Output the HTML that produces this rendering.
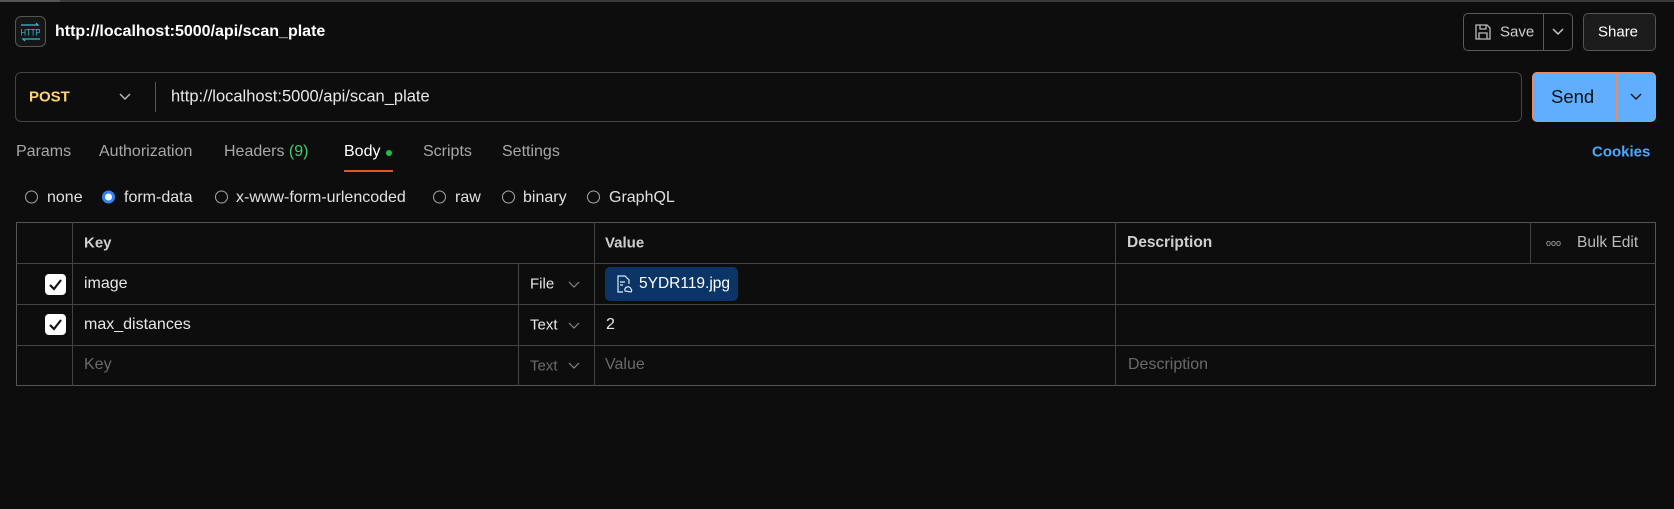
<!DOCTYPE html>
<html><head><meta charset="utf-8"><style>
*{box-sizing:border-box;margin:0;padding:0}
body{width:1674px;height:509px;background:#0d0d0d;font-family:"Liberation Sans",sans-serif;color:#d0d0d0;position:relative;overflow:hidden;font-size:16px}
.a{position:absolute}
.t{position:absolute;white-space:nowrap;transform:translateY(-50%)}
.rad{position:absolute;width:13px;height:13px;border:1px solid #a8a8a8;border-radius:50%;transform:translateY(-50%)}
.cb{position:absolute;width:21px;height:21px;background:#fff;border-radius:4px}
.hl{position:absolute;height:1px;background:#444}
.vl{position:absolute;width:1px;background:#444}
</style></head><body>
<div class="a" style="left:0;top:0;width:1674px;height:2px;background:#3a3a3a"></div>
<div class="a" style="left:0;top:0;width:60px;height:2px;background:#555"></div>

<div class="a" style="left:15px;top:16px;width:31px;height:31px;border:1px solid #555;border-radius:6px;background:#161616"></div>
<svg class="a" style="left:15px;top:16px" width="31" height="31" viewBox="0 0 31 31"><g stroke="#2ec4d6" fill="none" stroke-width="1.2"><path d="M6 9h17l-2-2M25 23H8l2 2"/></g><text x="15.5" y="19.5" font-size="9.5" fill="#2ec4d6" text-anchor="middle" font-family="Liberation Sans" textLength="20" lengthAdjust="spacingAndGlyphs">HTTP</text></svg>
<div class="t" style="left:55px;top:32px;font-weight:bold;font-size:16px;color:#fff">http://localhost:5000/api/scan_plate</div>

<div class="a" style="left:1463px;top:13px;width:110px;height:38px;border:1px solid #5a5a5a;border-radius:5px"></div>
<div class="vl" style="left:1543px;top:13px;height:38px;background:#5a5a5a"></div>
<svg class="a" style="left:1473px;top:22px" width="20" height="20" viewBox="0 0 20 20" fill="none" stroke="#bbb" stroke-width="1.3"><path d="M3 3h11l3 3v11H3z"/><path d="M7 3v4h6V3M6 17v-6h8v6"/></svg>
<div class="t" style="left:1500px;top:32px;color:#cfcfcf;font-size:15px">Save</div>
<svg class="a" style="left:1551px;top:27px" width="14" height="10" viewBox="0 0 14 10"><path d="M2 2l5 5 5-5" stroke="#ccc" fill="none" stroke-width="1.4"/></svg>
<div class="a" style="left:1583px;top:13px;width:73px;height:38px;border:1px solid #555;border-radius:5px;background:#1c1c1c"></div>
<div class="t" style="left:1598px;top:32px;color:#fff;font-size:15px">Share</div>

<div class="a" style="left:15px;top:72px;width:1507px;height:50px;border:1px solid #444;border-radius:6px"></div>
<div class="t" style="left:29px;top:97px;color:#ffd27a;font-weight:bold;font-size:15px">POST</div>
<svg class="a" style="left:118px;top:92px" width="14" height="10" viewBox="0 0 14 10"><path d="M2 2l5 5 5-5" stroke="#bbb" fill="none" stroke-width="1.4"/></svg>
<div class="vl" style="left:155px;top:82px;height:30px;background:#555"></div>
<div class="t" style="left:171px;top:97px;color:#e8e8e8;font-size:16.5px">http://localhost:5000/api/scan_plate</div>

<div class="a" style="left:1532px;top:72px;width:124px;height:50px;background:#61aeff;border:1px solid #f08a5d;border-radius:5px"></div>
<div class="vl" style="left:1616px;top:72px;height:50px;background:#f08a5d;width:1px"></div>
<div class="t" style="left:1551px;top:97px;color:#111;font-size:18.5px">Send</div>
<svg class="a" style="left:1629px;top:92px" width="14" height="10" viewBox="0 0 14 10"><path d="M2 2l5 5 5-5" stroke="#111" fill="none" stroke-width="1.4"/></svg>

<div class="t" style="left:16px;top:152px;color:#a8a8a8">Params</div>
<div class="t" style="left:99px;top:152px;color:#a8a8a8">Authorization</div>
<div class="t" style="left:224px;top:152px;color:#a8a8a8">Headers <span style="color:#3fd26a">(9)</span></div>
<div class="t" style="left:344px;top:152px;color:#fff">Body</div>
<div class="a" style="left:386px;top:150px;width:6px;height:6px;border-radius:50%;background:#1fbf4f"></div>
<div class="a" style="left:344px;top:170px;width:49px;height:2px;background:#e0562e"></div>
<div class="t" style="left:423px;top:152px;color:#a8a8a8">Scripts</div>
<div class="t" style="left:502px;top:152px;color:#a8a8a8">Settings</div>
<div class="t" style="left:1592px;top:152px;color:#4ca7ff;font-weight:bold;font-size:15px">Cookies</div>

<div class="rad" style="left:25px;top:197px"></div><div class="t" style="left:47px;top:198px;color:#e0e0e0">none</div>
<div class="rad" style="left:102px;top:197px;border:3.5px solid #2f86f0;background:#fff"></div><div class="t" style="left:124px;top:198px;color:#e0e0e0">form-data</div>
<div class="rad" style="left:215px;top:197px"></div><div class="t" style="left:236px;top:198px;color:#e0e0e0">x-www-form-urlencoded</div>
<div class="rad" style="left:433px;top:197px"></div><div class="t" style="left:455px;top:198px;color:#e0e0e0">raw</div>
<div class="rad" style="left:502px;top:197px"></div><div class="t" style="left:523px;top:198px;color:#e0e0e0">binary</div>
<div class="rad" style="left:587px;top:197px"></div><div class="t" style="left:609px;top:198px;color:#e0e0e0">GraphQL</div>

<div class="a" style="left:16px;top:222px;width:1640px;height:164px;border:1px solid #555"></div>
<div class="hl" style="left:16px;top:263px;width:1640px"></div>
<div class="hl" style="left:16px;top:304px;width:1640px"></div>
<div class="hl" style="left:16px;top:345px;width:1640px"></div>
<div class="vl" style="left:72px;top:222px;height:164px"></div>
<div class="vl" style="left:518px;top:263px;height:123px"></div>
<div class="vl" style="left:594px;top:222px;height:164px"></div>
<div class="vl" style="left:1115px;top:222px;height:164px"></div>
<div class="vl" style="left:1530px;top:222px;height:41px"></div>

<div class="t" style="left:84px;top:243px;font-weight:bold;color:#cfcfcf;font-size:15px">Key</div>
<div class="t" style="left:605px;top:243px;font-weight:bold;color:#cfcfcf;font-size:15px">Value</div>
<div class="t" style="left:1127px;top:243px;font-weight:bold;color:#cfcfcf;font-size:15.5px">Description</div>
<div class="t" style="left:1546px;top:243px;font-size:9px;color:#aaa">ooo</div>
<div class="t" style="left:1577px;top:243px;color:#bbb;font-size:15.5px">Bulk Edit</div>

<div class="cb" style="left:45px;top:274px"></div>
<svg class="a" style="left:45px;top:274px" width="21" height="21"><path d="M5 11l4 4 7-9" stroke="#111" stroke-width="2.2" fill="none"/></svg>
<div class="t" style="left:84px;top:284px;color:#e8e8e8">image</div>
<div class="t" style="left:530px;top:284px;color:#e8e8e8;font-size:15px">File</div>
<svg class="a" style="left:567px;top:280px" width="14" height="10" viewBox="0 0 14 10"><path d="M2 2l5 5 5-5" stroke="#888" fill="none" stroke-width="1.2"/></svg>
<div class="a" style="left:605px;top:267px;width:133px;height:34px;background:#0a3566;border-radius:5px"></div>
<svg class="a" style="left:615px;top:274px" width="18" height="20" viewBox="0 0 18 20" fill="none" stroke="#dfe9f5" stroke-width="1.2"><path d="M8 18H3V2h7l4 4v4"/><path d="M5 8h5M5 11h3M10 17a3 3 0 0 1 2-4 3 3 0 0 1 4 2 2 2 0 0 1 0 3z"/></svg>
<div class="t" style="left:639px;top:284px;color:#fff;font-size:15.5px">5YDR119.jpg</div>

<div class="cb" style="left:45px;top:314px"></div>
<svg class="a" style="left:45px;top:314px" width="21" height="21"><path d="M5 11l4 4 7-9" stroke="#111" stroke-width="2.2" fill="none"/></svg>
<div class="t" style="left:84px;top:325px;color:#e8e8e8">max_distances</div>
<div class="t" style="left:530px;top:325px;color:#e8e8e8;font-size:15px">Text</div>
<svg class="a" style="left:567px;top:321px" width="14" height="10" viewBox="0 0 14 10"><path d="M2 2l5 5 5-5" stroke="#888" fill="none" stroke-width="1.2"/></svg>
<div class="t" style="left:606px;top:325px;color:#e8e8e8">2</div>

<div class="t" style="left:84px;top:365px;color:#6a6a6a">Key</div>
<div class="t" style="left:530px;top:366px;color:#6a6a6a;font-size:15px">Text</div>
<svg class="a" style="left:567px;top:361px" width="14" height="10" viewBox="0 0 14 10"><path d="M2 2l5 5 5-5" stroke="#888" fill="none" stroke-width="1.2"/></svg>
<div class="t" style="left:605px;top:365px;color:#6a6a6a">Value</div>
<div class="t" style="left:1128px;top:365px;color:#6a6a6a">Description</div>
</body></html>
